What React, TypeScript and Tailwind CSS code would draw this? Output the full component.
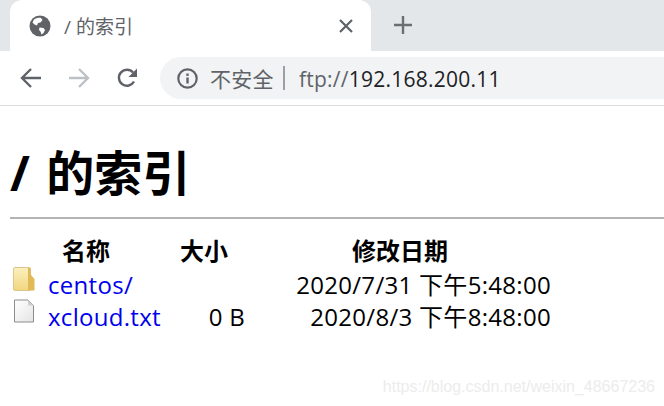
const uiFont = "font-['Open_Sans','Noto_Sans_CJK_SC',sans-serif]";

function Globe() {
  return (
    <svg width="22" height="22" viewBox="0 0 22 22" className="shrink-0">
      <circle cx="11" cy="11" r="10.5" fill="#5f6368" />
      <path d="M5 4.500c2-1.500 5-2 7-1.500l1.500 2-2 2.500-2.500.5-1 2.500-2.500-1-2-2z" fill="#fff" />
      <path d="M10.500 12.500l4 .5 1.500 2-1.500 3-2 1.500-1-3-1.500-1.500z" fill="#fff" />
    </svg>
  );
}

function ArrowLeft({ color }: { color: string }) {
  return (
    <svg width="22" height="22" viewBox="0 0 22 22" fill="none" stroke={color} strokeWidth="2.4">
      <path d="M21 11H2.500M11 2l-9 9 9 9" />
    </svg>
  );
}

function ArrowRight({ color }: { color: string }) {
  return (
    <svg width="22" height="22" viewBox="0 0 22 22" fill="none" stroke={color} strokeWidth="2.4">
      <path d="M1 11h18.500M11 2l9 9-9 9" />
    </svg>
  );
}

function Reload() {
  return (
    <svg width="22" height="22" viewBox="0 0 22 22" fill="none">
      <path d="M18 14.500A8 8 0 1 1 17 5.500" stroke="#5f6368" strokeWidth="2.400" />
      <path d="M21 1.500V10h-8.500z" fill="#5f6368" />
    </svg>
  );
}

function Info() {
  return (
    <svg width="21" height="21" viewBox="0 0 21 21" fill="none" className="shrink-0">
      <circle cx="10.500" cy="10.500" r="9.200" stroke="#5f6368" strokeWidth="2.200" />
      <rect x="9.300" y="9.500" width="2.400" height="6" fill="#5f6368" />
      <rect x="9.300" y="5.500" width="2.400" height="2.400" fill="#5f6368" />
    </svg>
  );
}

function FolderIcon() {
  return (
    <svg width="22" height="24" viewBox="0 0 22 24">
      <defs>
        <linearGradient id="fold" x1="0" y1="0" x2="0" y2="1">
          <stop offset="0" stopColor="#faf0c0" />
          <stop offset="1" stopColor="#f3d67e" />
        </linearGradient>
      </defs>
      <rect x="0.500" y="0.500" width="17" height="23" rx="1.500" fill="url(#fold)" stroke="#dcc58a" />
      <path d="M15 1h2l1 7 3.500 4v10.500c0 .6-.4 1-1 1H15z" fill="#e2b957" />
    </svg>
  );
}

function FileIcon() {
  return (
    <svg width="22" height="24" viewBox="0 0 22 24">
      <defs>
        <linearGradient id="page" x1="0" y1="0" x2="1" y2="1">
          <stop offset="0" stopColor="#ffffff" />
          <stop offset="1" stopColor="#e4e4e4" />
        </linearGradient>
      </defs>
      <path d="M1.500 1H15l5.500 5.500V23h-19z" fill="url(#page)" stroke="#8d8d8d" strokeWidth="1" />
      <path d="M15 1v5.500h5.500z" fill="#cfcfcf" />
    </svg>
  );
}

const rows = [
  { name: "centos/", size: "", date: "2020/7/31 下午5:48:00", Icon: FolderIcon },
  { name: "xcloud.txt", size: "0 B", date: "2020/8/3 下午8:48:00", Icon: FileIcon },
];

export default function App() {
  return (
    <div className={`relative h-[406px] w-[664px] overflow-hidden bg-white ${uiFont}`}>
      {/* tab strip */}
      <div className="flex h-[51px] items-start bg-[#e4e7ea] pl-[10px]">
        <div className="flex h-[51px] w-[361px] items-center rounded-t-[12px] bg-white pl-[19px] pr-[18px]">
          <Globe />
          <span className="ml-[13px] flex-1 pt-[3px] text-[19px] leading-none text-[#5f6368]">/ 的索引</span>
          <svg width="14" height="14" viewBox="0 0 14 14" stroke="#5f6368" strokeWidth="2.200">
            <path d="M1 1l12 12M13 1L1 13" />
          </svg>
        </div>
        <svg width="18" height="18" viewBox="0 0 18 18" fill="#6b6f73" className="ml-[23px] mt-[16px]">
          <path d="M7.800 0h2.400v7.800H18v2.400h-7.800V18H7.800v-7.800H0V7.800h7.800z" />
        </svg>
      </div>

      {/* toolbar */}
      <div className="flex h-[55px] items-center border-b border-[#dadce0] pl-[20px]">
        <ArrowLeft color="#5f6368" />
        <div className="ml-[26px]"><ArrowRight color="#bdc1c6" /></div>
        <div className="ml-[26px]"><Reload /></div>
        <div className="ml-[22px] flex h-[42px] flex-1 items-center rounded-l-[21px] bg-[#f1f3f4] pl-[17px]">
          <Info />
          <span className="ml-[12px] pt-[2px] text-[21px] leading-none tracking-[0.3px] text-[#5f6368]">不安全</span>
          <div className="ml-[9px] h-[24px] w-[2px] bg-[#9aa0a6]" />
          <span className="ml-[14px] pt-[2px] text-[21px] leading-none tracking-[0.25px] text-[#5f6368]">
            ftp://<span className="text-[#202124]">192.168.200.11</span>
          </span>
        </div>
      </div>

      {/* page */}
      <div className="pl-[10px] text-black">
        <h1 className="mt-[37px] text-[48px] font-bold leading-[60px] [word-spacing:4px]">/ 的索引</h1>
        <div className="mt-[14px] h-[2px] bg-[#b4b4b4]" />
        <div className="mt-[17px] grid grid-cols-[38px_132px_65px_306px] text-[24px] leading-[32px] tracking-[0.3px]">
          <div />
          <div className="pb-[3px] pl-[14px] font-bold leading-[30px] tracking-normal">名称</div>
          <div className="pb-[3px] font-bold leading-[30px] tracking-normal whitespace-nowrap">大小</div>
          <div className="pb-[3px] pl-[107px] font-bold leading-[30px] tracking-normal">修改日期</div>
          {rows.map((row) => (
            <div key={row.name} className="contents">
              <div className="-mt-[2px] pl-[3px]"><row.Icon /></div>
              <a className="whitespace-nowrap text-[#0000ee]">{row.name}</a>
              <div className="text-right whitespace-nowrap">{row.size}</div>
              <div className="text-right whitespace-nowrap">{row.date}</div>
            </div>
          ))}
        </div>
      </div>

      {/* csdn watermark */}
      <div className="absolute bottom-[11px] right-[9px] font-['Liberation_Sans',sans-serif] text-[16px] leading-none text-[#ececec]">
        https://blog.csdn.net/weixin_48667236
      </div>
    </div>
  );
}
